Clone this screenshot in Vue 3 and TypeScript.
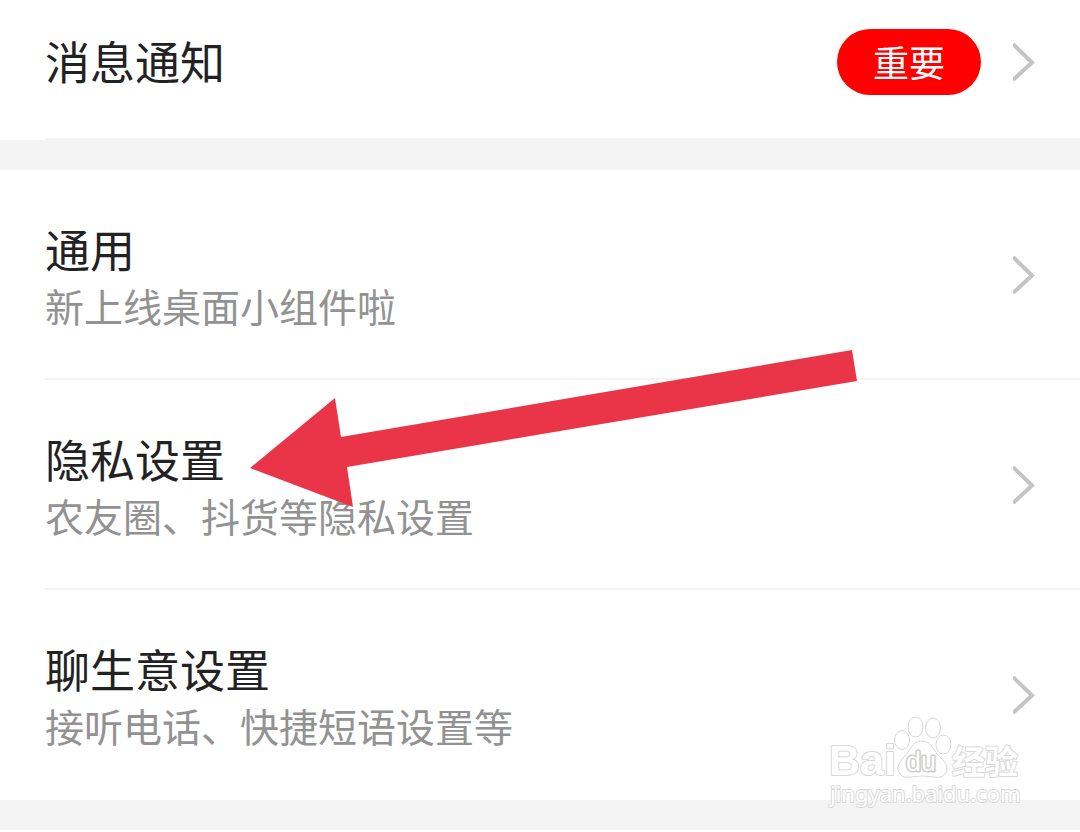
<script setup lang="ts">
interface Setting {
  title: string
  note?: string
  badge?: string
}

const groups: Setting[][] = [
  [{ title: '消息通知', badge: '重要' }],
  [
    { title: '通用', note: '新上线桌面小组件啦' },
    { title: '隐私设置', note: '农友圈、抖货等隐私设置' },
    { title: '聊生意设置', note: '接听电话、快捷短语设置等' },
  ],
]
</script>

<template>
  <main class="page">
    <ul v-for="(group, index) in groups" :key="index" class="group">
      <li v-for="item in group" :key="item.title" class="item" :class="{ compact: !item.note }">
        <button type="button" class="row">
          <span class="copy">
            <span class="title">{{ item.title }}</span>
            <span v-if="item.note" class="note">{{ item.note }}</span>
          </span>
          <span v-if="item.badge" class="badge">{{ item.badge }}</span>
          <svg class="chevron" viewBox="0 0 22 38" aria-hidden="true">
            <path d="M0 1 L19 19.500 L0 37" />
          </svg>
        </button>
      </li>
    </ul>

    <svg class="arrow" viewBox="0 0 608 157" aria-hidden="true">
      <path d="M0 118 L85 48 L91 87 L602 0 L607 31 L97 117 L103 157 Z" />
    </svg>

    <svg class="watermark" viewBox="0 0 200 100" aria-hidden="true">
      <g class="mark">
        <text class="latin" x="3" y="61">Bai</text>
        <ellipse cx="76" cy="26" rx="7.500" ry="9.500" />
        <ellipse cx="89.500" cy="13" rx="7.500" ry="10" />
        <ellipse cx="107" cy="14" rx="7.500" ry="10" />
        <ellipse cx="117.500" cy="30.500" rx="7.500" ry="9.500" />
        <path
          d="M96 27 C106 27 107 37 114 43 C121 49 123 55 119 60 C115 66 106 62 96 62 C86 62 79 66 74 60 C69 54 74 47 79 42 C85 36 86 27 96 27 Z"
        />
        <text class="du" x="80" y="57">du</text>
        <text class="han" x="126" y="60">经验</text>
        <text class="site" x="4" y="88">jingyan.baidu.com</text>
      </g>
    </svg>
  </main>
</template>

<style>
body {
  margin: 0;
  background: #fff;
}
</style>

<style scoped>
.page {
  position: relative;
  overflow: hidden;
  font-family: 'Noto Sans CJK SC', sans-serif;
}

.group {
  margin: 0;
  padding: 0;
  list-style: none;
  border-bottom: 30px solid #f4f4f4;
}

.item:not(:last-child),
.compact {
  background: linear-gradient(#f4f4f4, #f4f4f4) 45px 100% / 100% 2px no-repeat;
}

.row {
  box-sizing: border-box;
  display: flex;
  align-items: center;
  gap: 32px;
  width: 100%;
  min-height: 210px;
  padding: 0 45px;
  border: 0;
  background: none;
  font-family: inherit;
  text-align: left;
  cursor: pointer;
}

.compact .row {
  min-height: 140px;
  padding-bottom: 16px;
}

.copy {
  flex: 1;
  display: flex;
  flex-direction: column;
  gap: 8px;
  padding-top: 2px;
}

.compact .copy {
  padding: 0 0 2px;
}

.title {
  color: #222;
  font-size: 45px;
  line-height: 50px;
}

.note {
  color: #929292;
  font-size: 39px;
  line-height: 46px;
}

.badge {
  padding: 0 36px 2px;
  border-radius: 33px;
  background: #f00;
  color: #fff;
  font-size: 36px;
  line-height: 64px;
}

.chevron {
  width: 22px;
  height: 38px;
  fill: none;
  stroke: #c4c4c4;
  stroke-width: 4;
}

.arrow {
  position: absolute;
  top: 350px;
  left: 250px;
  width: 608px;
  height: 157px;
  fill: #ea3549;
}

.watermark {
  position: absolute;
  right: 54px;
  bottom: 16px;
  width: 200px;
  height: 100px;
  pointer-events: none;
}

.mark {
  fill: #fff;
  stroke: #d8d8d8;
  stroke-width: 1;
}

.mark text {
  stroke-width: 2;
  stroke-linejoin: round;
  paint-order: stroke;
}

.latin {
  font: bold 43px 'Liberation Sans', sans-serif;
}

.mark .du {
  font: 27px 'Liberation Sans', sans-serif;
  stroke: #ccc;
  stroke-width: 3;
}

.han {
  font: bold 33px 'Noto Sans CJK SC', sans-serif;
}

.site {
  font: 22px 'Noto Sans', sans-serif;
}
</style>
